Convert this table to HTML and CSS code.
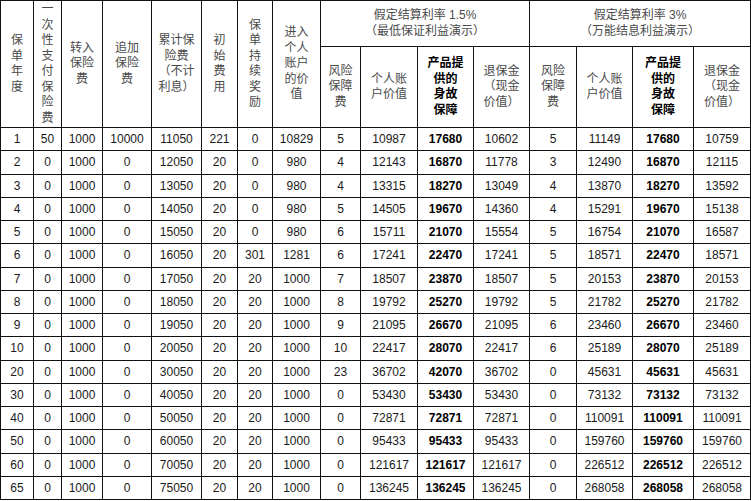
FILE: index.html
```html
<!DOCTYPE html>
<html lang="zh-CN">
<head>
<meta charset="utf-8">
<title>利益演示表</title>
<link rel="stylesheet" href="styles.css">
</head>
<body>
<table class="tbl">
<colgroup>
<col class="c33"><col class="c28"><col class="c41"><col class="c49"><col class="c50"><col class="c36"><col class="c35"><col class="c48">
<col class="c40"><col class="c57"><col class="c56"><col class="c56">
<col class="c47"><col class="c56"><col class="c61"><col class="c57">
</colgroup>
<thead>
<tr class="h1">
<th rowspan="2">保<br>单<br>年<br>度</th>
<th rowspan="2">一<br>次<br>性<br>支<br>付<br>保<br>险<br>费</th>
<th rowspan="2">转入<br>保险<br>费</th>
<th rowspan="2">追加<br>保险<br>费</th>
<th rowspan="2">累计保<br>险费<br>（不计<br>利息）</th>
<th rowspan="2">初<br>始<br>费<br>用</th>
<th rowspan="2">保<br>单<br>持<br>续<br>奖<br>励</th>
<th rowspan="2">进入<br>个人<br>账户<br>的价<br>值</th>
<th colspan="4">假定结算利率 1.5%<br>（最低保证利益演示）</th>
<th colspan="4">假定结算利率 3%<br>（万能结息利益演示）</th>
</tr>
<tr class="h2">
<th>风险<br>保障<br>费</th>
<th>个人账<br>户价值</th>
<th class="bh">产品提<br>供的<br>身故<br>保障</th>
<th>退保金<br>（现金<br>价值）</th>
<th>风险<br>保障<br>费</th>
<th>个人账<br>户价值</th>
<th class="bh">产品提<br>供的<br>身故<br>保障</th>
<th>退保金<br>（现金<br>价值）</th>
</tr>
</thead>
<tbody>
<tr><td>1</td><td>50</td><td>1000</td><td>10000</td><td>11050</td><td>221</td><td>0</td><td>10829</td><td>5</td><td>10987</td><td class="b">17680</td><td>10602</td><td>5</td><td>11149</td><td class="b">17680</td><td>10759</td></tr>
<tr><td>2</td><td>0</td><td>1000</td><td>0</td><td>12050</td><td>20</td><td>0</td><td>980</td><td>4</td><td>12143</td><td class="b">16870</td><td>11778</td><td>3</td><td>12490</td><td class="b">16870</td><td>12115</td></tr>
<tr><td>3</td><td>0</td><td>1000</td><td>0</td><td>13050</td><td>20</td><td>0</td><td>980</td><td>4</td><td>13315</td><td class="b">18270</td><td>13049</td><td>4</td><td>13870</td><td class="b">18270</td><td>13592</td></tr>
<tr><td>4</td><td>0</td><td>1000</td><td>0</td><td>14050</td><td>20</td><td>0</td><td>980</td><td>5</td><td>14505</td><td class="b">19670</td><td>14360</td><td>4</td><td>15291</td><td class="b">19670</td><td>15138</td></tr>
<tr><td>5</td><td>0</td><td>1000</td><td>0</td><td>15050</td><td>20</td><td>0</td><td>980</td><td>6</td><td>15711</td><td class="b">21070</td><td>15554</td><td>5</td><td>16754</td><td class="b">21070</td><td>16587</td></tr>
<tr><td>6</td><td>0</td><td>1000</td><td>0</td><td>16050</td><td>20</td><td>301</td><td>1281</td><td>6</td><td>17241</td><td class="b">22470</td><td>17241</td><td>5</td><td>18571</td><td class="b">22470</td><td>18571</td></tr>
<tr><td>7</td><td>0</td><td>1000</td><td>0</td><td>17050</td><td>20</td><td>20</td><td>1000</td><td>7</td><td>18507</td><td class="b">23870</td><td>18507</td><td>5</td><td>20153</td><td class="b">23870</td><td>20153</td></tr>
<tr><td>8</td><td>0</td><td>1000</td><td>0</td><td>18050</td><td>20</td><td>20</td><td>1000</td><td>8</td><td>19792</td><td class="b">25270</td><td>19792</td><td>5</td><td>21782</td><td class="b">25270</td><td>21782</td></tr>
<tr><td>9</td><td>0</td><td>1000</td><td>0</td><td>19050</td><td>20</td><td>20</td><td>1000</td><td>9</td><td>21095</td><td class="b">26670</td><td>21095</td><td>6</td><td>23460</td><td class="b">26670</td><td>23460</td></tr>
<tr><td>10</td><td>0</td><td>1000</td><td>0</td><td>20050</td><td>20</td><td>20</td><td>1000</td><td>10</td><td>22417</td><td class="b">28070</td><td>22417</td><td>6</td><td>25189</td><td class="b">28070</td><td>25189</td></tr>
<tr><td>20</td><td>0</td><td>1000</td><td>0</td><td>30050</td><td>20</td><td>20</td><td>1000</td><td>23</td><td>36702</td><td class="b">42070</td><td>36702</td><td>0</td><td>45631</td><td class="b">45631</td><td>45631</td></tr>
<tr><td>30</td><td>0</td><td>1000</td><td>0</td><td>40050</td><td>20</td><td>20</td><td>1000</td><td>0</td><td>53430</td><td class="b">53430</td><td>53430</td><td>0</td><td>73132</td><td class="b">73132</td><td>73132</td></tr>
<tr><td>40</td><td>0</td><td>1000</td><td>0</td><td>50050</td><td>20</td><td>20</td><td>1000</td><td>0</td><td>72871</td><td class="b">72871</td><td>72871</td><td>0</td><td>110091</td><td class="b">110091</td><td>110091</td></tr>
<tr><td>50</td><td>0</td><td>1000</td><td>0</td><td>60050</td><td>20</td><td>20</td><td>1000</td><td>0</td><td>95433</td><td class="b">95433</td><td>95433</td><td>0</td><td>159760</td><td class="b">159760</td><td>159760</td></tr>
<tr><td>60</td><td>0</td><td>1000</td><td>0</td><td>70050</td><td>20</td><td>20</td><td>1000</td><td>0</td><td>121617</td><td class="b">121617</td><td>121617</td><td>0</td><td>226512</td><td class="b">226512</td><td>226512</td></tr>
<tr><td>65</td><td>0</td><td>1000</td><td>0</td><td>75050</td><td>20</td><td>20</td><td>1000</td><td>0</td><td>136245</td><td class="b">136245</td><td>136245</td><td>0</td><td>268058</td><td class="b">268058</td><td>268058</td></tr>
</tbody>
</table>
</body>
</html>
```
FILE: styles.css
```css
html, body {
  margin: 0;
  padding: 0;
  background: #ffffff;
}

.tbl {
  table-layout: fixed;
  border-collapse: collapse;
  width: 750px;
  font-family: "Liberation Sans", Arial, "Noto Sans CJK SC", sans-serif;
  font-size: 12px;
  color: #1a1a1a;
}

.c33 { width: 33px; }
.c28 { width: 28px; }
.c41 { width: 41px; }
.c49 { width: 49px; }
.c50 { width: 50px; }
.c36 { width: 36px; }
.c35 { width: 35px; }
.c48 { width: 48px; }
.c40 { width: 40px; }
.c57 { width: 57px; }
.c56 { width: 56px; }
.c47 { width: 47px; }
.c61 { width: 61px; }

.tbl th,
.tbl td {
  border: 1px solid #111;
  padding: 0;
  text-align: center;
  vertical-align: middle;
  overflow: hidden;
  white-space: nowrap;
}

.tbl th {
  font-weight: normal;
  color: #4a4a4a;
  line-height: 15.5px;
}

.tbl th.bh {
  font-weight: bold;
  color: #000;
}

.h1 { height: 46px; }
.h2 { height: 81px; }

.tbl tbody tr { height: 23.25px; }

.tbl td { line-height: 14px; }

.tbl td.b {
  font-weight: bold;
  color: #000;
}
```
